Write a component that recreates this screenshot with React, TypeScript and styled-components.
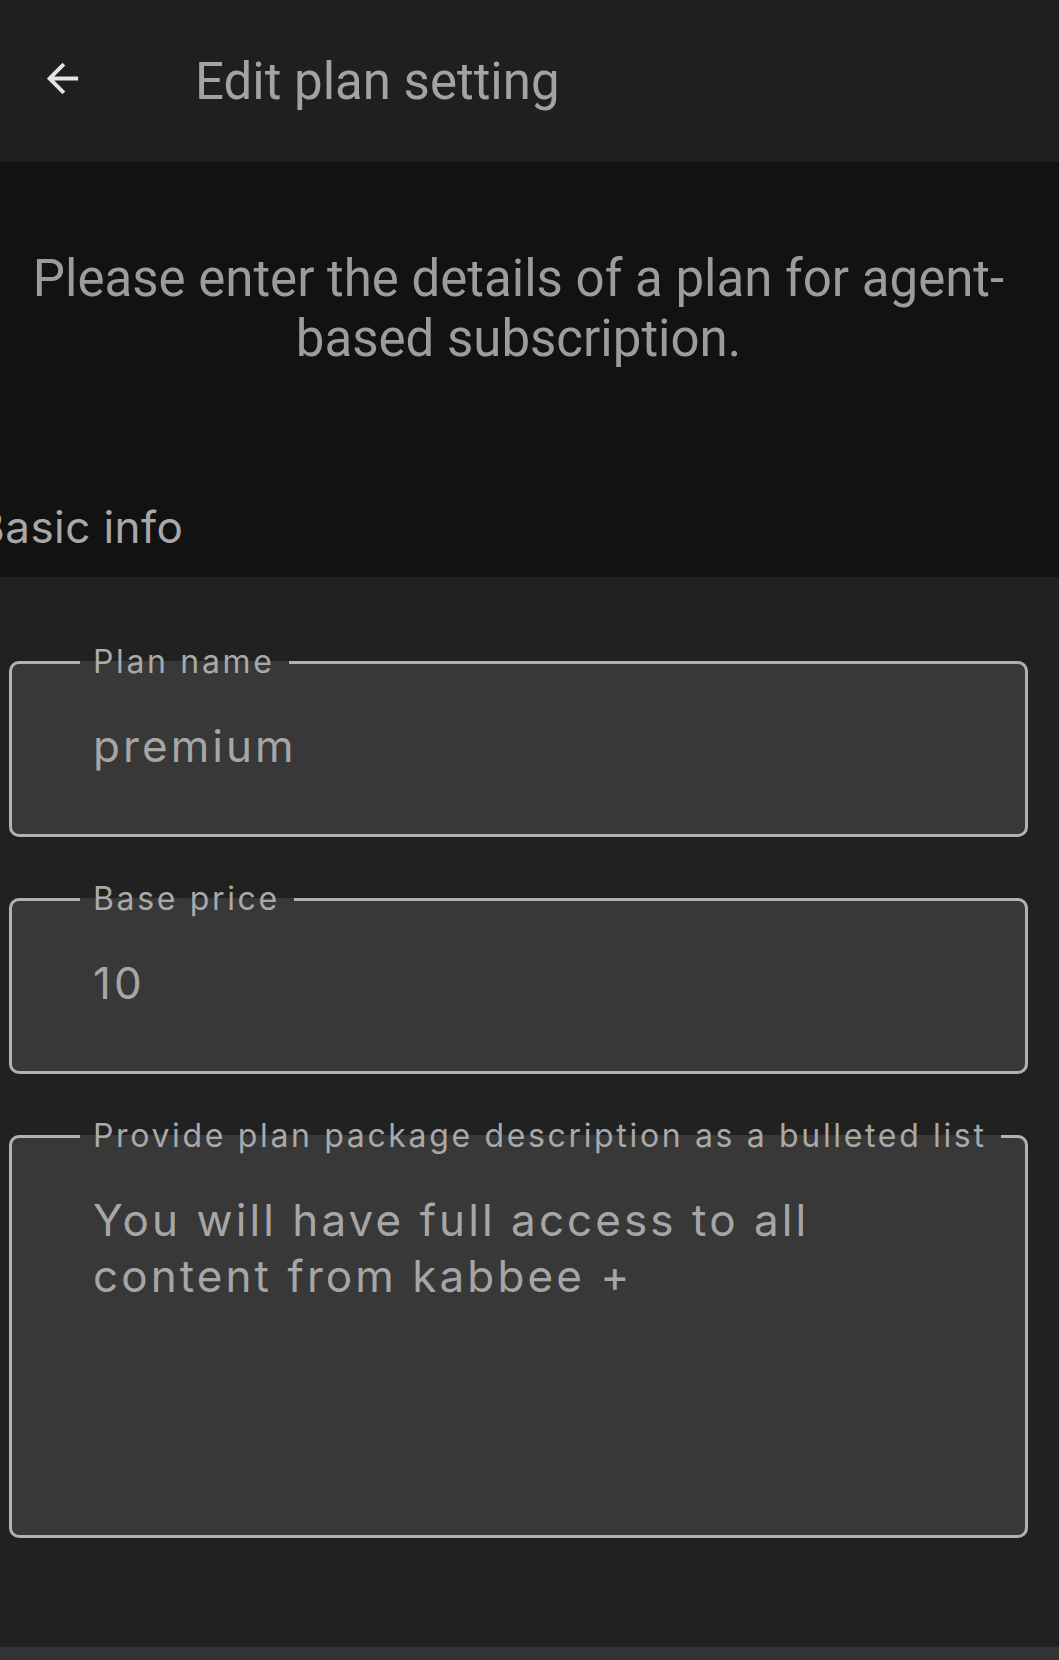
import styled, { createGlobalStyle } from 'styled-components'

const GlobalStyle = createGlobalStyle`
  html, body {
    margin: 0;
    padding: 0;
    background: #333333;
  }
  * {
    box-sizing: border-box;
  }
`

export default function App() {
  return (
    <Page>
      <GlobalStyle />
      <Header>
        <BackButton aria-label='Back'>
          <svg viewBox='0 0 24 24' width='47' height='47' fill='#e4e4e4'>
            <path d='M20 11H7.83l5.59-5.59L12 4l-8 8 8 8 1.41-1.41L7.83 13H20v-2z' />
          </svg>
        </BackButton>
        <Title>Edit plan setting</Title>
      </Header>

      <Intro>
        <IntroText>Please enter the details of a plan for agent-based subscription.</IntroText>
        <SectionTitle>Basic info</SectionTitle>
      </Intro>

      <Form>
        <Field>
          <Label>Plan name</Label>
          <Value>premium</Value>
        </Field>
        <Field>
          <Label>Base price</Label>
          <Value>10</Value>
        </Field>
        <Field>
          <Label>Provide plan package description as a bulleted list</Label>
          <Value $multiline>You will have full access to all content from kabbee +</Value>
        </Field>
      </Form>
    </Page>
  )
}

const Page = styled.div`
  width: 100%;
  display: flex;
  flex-direction: column;
`

const Header = styled.header`
  height: 162px;
  display: flex;
  flex-direction: row;
  align-items: center;
  padding: 0 0 6px 39px;
  background: #1f1f1f;
`

const BackButton = styled.div`
  width: 47px;
  height: 47px;
  display: flex;
  align-items: center;
  justify-content: center;
  cursor: pointer;

  svg {
    display: block;
  }
`

const Title = styled.h1`
  margin: 6px 0 0 109px;
  font-family: Roboto, 'Liberation Sans', sans-serif;
  font-weight: 400;
  font-size: 51px;
  line-height: normal;
  color: #a3a3a3;
`

const Intro = styled.section`
  height: 415px;
  padding: 87px 22px 0 0;
  background: #121212;
  overflow: hidden;
`

const IntroText = styled.p`
  margin: 0;
  text-align: center;
  font-family: Roboto, 'Liberation Sans', sans-serif;
  font-size: 51px;
  line-height: 60px;
  color: #9c9c9c;
`

const SectionTitle = styled.h2`
  margin: 132px 0 0 -24px;
  font-family: Inter, 'Noto Sans', sans-serif;
  font-weight: 400;
  font-size: 44px;
  letter-spacing: 0.01em;
  line-height: 53px;
  color: #a8a8a8;
`

const Form = styled.section`
  height: 1070px;
  display: flex;
  flex-direction: column;
  gap: 43px;
  padding: 66px 31px 0 9px;
  background: #212121;
`

const Field = styled.fieldset`
  margin: 0;
  padding: 0 0 0 81px;
  min-width: 0;
  border: 3px solid #b2b2b2;
  border-radius: 10px;
  background: #383838;
`

const Label = styled.legend`
  margin-left: -13px;
  padding: 0 14px 0 13px;
  font-family: Inter, 'Noto Sans', sans-serif;
  font-size: 32px;
  line-height: 38px;
  letter-spacing: 0.083em;
  color: #a9a9a9;
`

const Value = styled.div<{ $multiline?: boolean }>`
  max-width: ${p => (p.$multiline ? '800px' : 'none')};
  min-height: ${p => (p.$multiline ? '380px' : '0')};
  padding: 37px 0 60px;
  font-family: Inter, 'Noto Sans', sans-serif;
  font-size: 44px;
  line-height: 56px;
  letter-spacing: 0.07em;
  color: #a6a6a6;
`
